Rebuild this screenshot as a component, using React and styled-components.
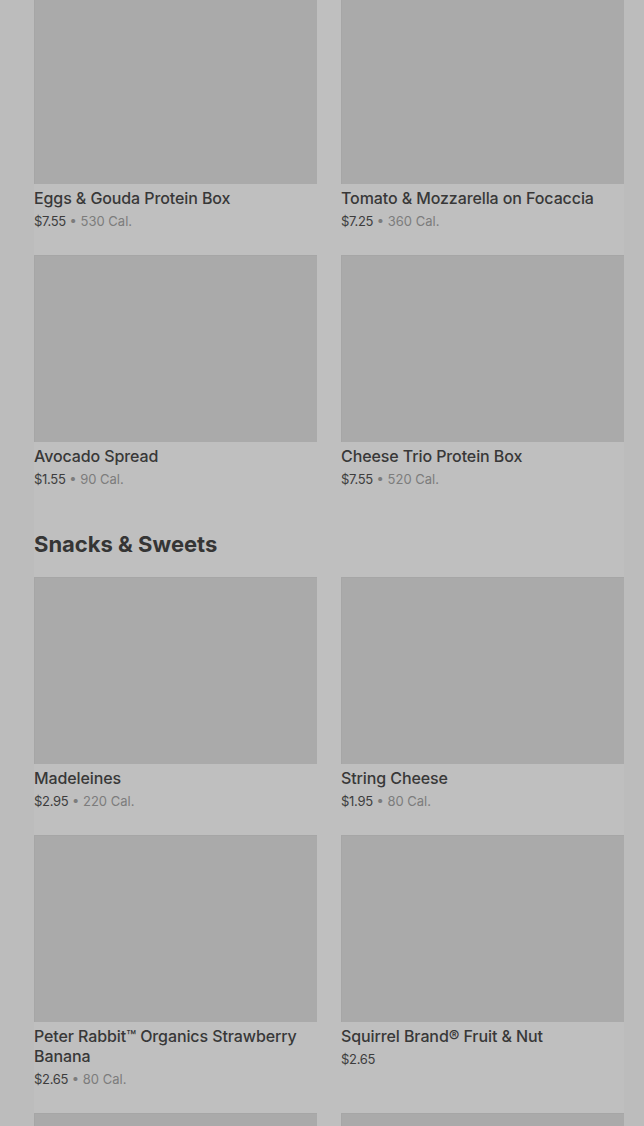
import React from "react";
import styled, { createGlobalStyle } from "styled-components";

const Global = createGlobalStyle`
  html, body { margin: 0; padding: 0; background: #bcbcbc; }
  body { font-family: Inter, "Noto Sans", "Liberation Sans", sans-serif; overflow: hidden; }
`;

const Page = styled.div`
  width: 644px;
  height: 1126px;
  overflow: hidden;
  background: #bcbcbc;
`;

const Content = styled.div`
  margin: -3px 20px 0 34px;
  width: 590px;
  background: #bfbfbf;
  display: flex;
  flex-direction: column;
`;

const Section = styled.section`
  display: flex;
  flex-direction: column;
  margin-bottom: ${(p) => p.$after || 0}px;
`;

const Heading = styled.h2`
  margin: 0 0 19px;
  font-size: 22px;
  line-height: 28px;
  font-weight: 700;
  color: #353535;
`;

const Grid = styled.div`
  display: grid;
  grid-template-columns: 283px 283px;
  column-gap: 24px;
  row-gap: 25px;
`;

const Card = styled.div`
  display: flex;
  flex-direction: column;
`;

const Thumb = styled.div`
  height: 187px;
  background: #aaaaaa;
  box-shadow: inset 6px 6px 0 -5px #a6a6a6;
`;

const Title = styled.div`
  margin-top: 4px;
  font-size: 16px;
  line-height: 20px;
  font-weight: 500;
  color: #383838;
  letter-spacing: -0.1px;
`;

const Meta = styled.div`
  margin-top: 4px;
  font-size: 13px;
  line-height: 18px;
  color: #3d3d3d;
  letter-spacing: -0.3px;
`;

const Cal = styled.span`
  color: #7c7c7c;
  letter-spacing: 0;
`;

const items1 = [
  { name: "Eggs & Gouda Protein Box", price: "$7.55", cal: "530 Cal." },
  { name: "Tomato & Mozzarella on Focaccia", price: "$7.25", cal: "360 Cal." },
  { name: "Avocado Spread", price: "$1.55", cal: "90 Cal." },
  { name: "Cheese Trio Protein Box", price: "$7.55", cal: "520 Cal." },
];

const items2 = [
  { id: "a", name: "Madeleines", price: "$2.95", cal: "220 Cal." },
  { id: "b", name: "String Cheese", price: "$1.95", cal: "80 Cal." },
  { id: "c", name: "Peter Rabbit™ Organics Strawberry Banana", price: "$2.65", cal: "80 Cal." },
  { id: "d", name: "Squirrel Brand® Fruit & Nut", price: "$2.65" },
  { id: "e" },
  { id: "f" },
];

function Item({ it }) {
  return (
    <Card>
      <Thumb />
      {it.name && <Title>{it.name}</Title>}
      {it.price && (
        <Meta>
          {it.price}
          {it.cal && <Cal> • {it.cal}</Cal>}
        </Meta>
      )}
    </Card>
  );
}

export default function App() {
  return (
    <Page>
      <Global />
      <Content>
        <Section $after={42}>
          <Grid>
            {items1.map((it) => (
              <Item key={it.name} it={it} />
            ))}
          </Grid>
        </Section>
        <Section>
          <Heading>Snacks &amp; Sweets</Heading>
          <Grid>
            {items2.map((it) => (
              <Item key={it.id} it={it} />
            ))}
          </Grid>
        </Section>
      </Content>
    </Page>
  );
}
